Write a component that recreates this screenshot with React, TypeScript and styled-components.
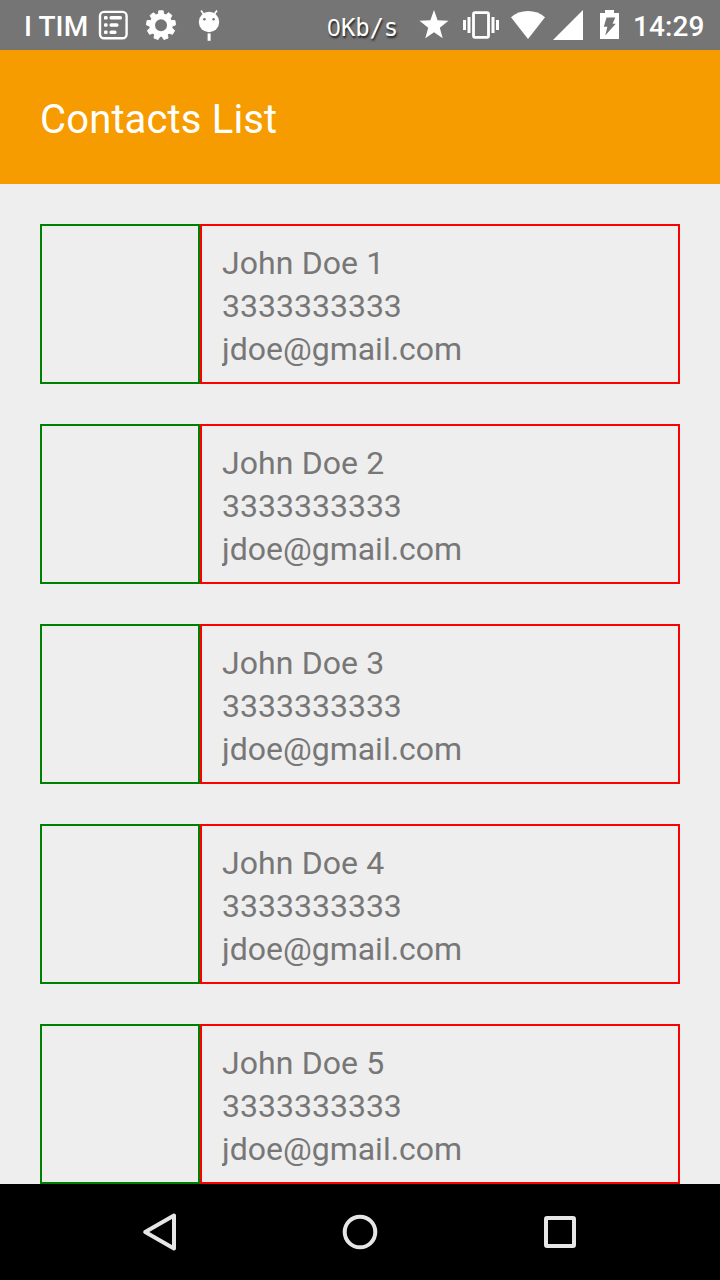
import React from "react";
import styled, { createGlobalStyle } from "styled-components";

const GlobalStyle = createGlobalStyle`
  * { box-sizing: border-box; }
  body { margin: 0; background: #eeeeee; font-family: Roboto, "Noto Sans", sans-serif; }
`;

const Screen = styled.div`
  display: flex;
  flex-direction: column;
  width: 720px;
  height: 1280px;
  overflow: hidden;
  background: #eeeeee;
`;

const StatusBar = styled.header`
  display: flex;
  flex: none;
  align-items: center;
  height: 50px;
  padding-left: 24px;
  background: #757575;
  color: #fff;
`;

const StatusText = styled.span<{ $width: number }>`
  flex: none;
  width: ${(p) => p.$width}px;
  padding-top: 3px;
  font-size: 28px;
  font-weight: 500;
  line-height: 34px;
  letter-spacing: 0.1px;
  white-space: pre;
`;

const Speed = styled.span`
  display: flex;
  flex: none;
  align-items: baseline;
  width: 92px;
  padding-top: 5px;
  font: 24px/34px "DejaVu Sans Mono", monospace;
  letter-spacing: -0.2px;
  text-shadow: 1px 2px 2px rgba(0, 0, 0, 0.7);
`;

const SpeedValue = styled.span`
  width: 14px;
  font-family: "Noto Sans", sans-serif;
`;

const StatusIcon = styled.svg<{ $gap?: number }>`
  flex: none;
  height: 50px;
  margin-right: ${(p) => p.$gap ?? 0}px;
  fill: #fff;
`;

const AppBar = styled.div`
  display: flex;
  flex: none;
  align-items: center;
  height: 134px;
  padding: 6px 40px 0;
  background: #f69c00;
`;

const Title = styled.h1`
  margin: 0;
  color: #fff;
  font-size: 40px;
  font-weight: 400;
  line-height: 48px;
  letter-spacing: 0.15px;
`;

const List = styled.main`
  display: flex;
  flex: 1;
  flex-direction: column;
  gap: 40px;
  min-height: 0;
  padding: 40px 40px 0;
  overflow: hidden;
`;

const Row = styled.article`
  display: flex;
  flex: none;
  height: 160px;
`;

const Photo = styled.div`
  width: 160px;
  border: 2px solid #008000;
`;

const Details = styled.div`
  flex: 1;
  padding: 16px 20px 0;
  border: 2px solid #ff0000;
`;

const Line = styled.div<{ $spacing?: number }>`
  color: #777;
  font-size: 32px;
  line-height: 43px;
  letter-spacing: ${(p) => p.$spacing ?? 0}px;
  overflow-x: clip;
`;

const NavBar = styled.nav`
  display: flex;
  flex: none;
  align-items: center;
  justify-content: center;
  gap: 104px;
  height: 96px;
  background: #000;
`;

const NavIcon = styled.svg`
  width: 96px;
  height: 96px;
  fill: none;
  stroke: #e6e6e6;
  stroke-width: 4;
  stroke-linejoin: round;
`;

const GEAR_TEETH = [0, 40, 80, 120, 160, 200, 240, 280, 320];
const CONTACTS = [1, 2, 3, 4, 5].map((n) => ({
  name: `John Doe ${n}`,
  phone: "3333333333",
  email: "jdoe@gmail.com",
}));

export default function App() {
  return (
    <>
      <GlobalStyle />
      <Screen>
        <StatusBar>
          <StatusText $width={74}>I TIM</StatusText>
          <StatusIcon width={30} viewBox="0 0 30 50" $gap={17}>
            <rect x="2" y="11.9" width="26.6" height="26.4" rx="4" fill="none" stroke="#fff" strokeWidth="2.4" />
            <rect x="6" y="16" width="3.6" height="3.6" rx="1.2" />
            <rect x="6" y="23.2" width="3.6" height="3.6" rx="1.2" />
            <rect x="6" y="30.4" width="3.6" height="3.6" rx="1.2" />
            <rect x="11.5" y="16" width="12.5" height="3.6" rx="1.6" />
            <rect x="11.5" y="23.2" width="9" height="3.6" rx="1.6" />
            <rect x="11.5" y="30.4" width="7" height="3.6" rx="1.6" />
          </StatusIcon>
          <StatusIcon width={32} viewBox="0 0 32 50" $gap={21}>
            <circle cx="16" cy="25.2" r="8.8" fill="none" stroke="#fff" strokeWidth="5.6" />
            {GEAR_TEETH.map((a) => (
              <path
                key={a}
                d="M13 15 13.8 10.7h4.4l.8 4.3z"
                stroke="#fff"
                strokeWidth="0.8"
                strokeLinejoin="round"
                transform={`rotate(${a} 16 25.2)`}
              />
            ))}
          </StatusIcon>
          <StatusIcon width={22} viewBox="0 0 22 50" $gap={107}>
            <path d="M3 10.5 6.3 15M19 10.5 15.7 15" stroke="#fff" strokeWidth="1.7" />
            <circle cx="11" cy="22" r="10.2" />
            <circle cx="6.4" cy="19.3" r="1.3" fill="#757575" />
            <circle cx="15.6" cy="19.3" r="1.3" fill="#757575" />
            <rect x="9.6" y="33.4" width="3" height="7.4" />
          </StatusIcon>
          <Speed>
            <SpeedValue>0</SpeedValue>Kb/s
          </Speed>
          <StatusIcon width={30} viewBox="0 0 30 50" $gap={14}>
            <path d="M15 10 18.6 20.2 29.5 20.8 20.8 27.7 23.7 38.3 15 32.2 6.3 38.3 9.2 27.7.5 20.8 11.4 20.2z" />
          </StatusIcon>
          <StatusIcon width={36} viewBox="0 0 36 50" $gap={12}>
            <rect x="10.5" y="12.7" width="15" height="24.6" rx="1.5" fill="none" stroke="#fff" strokeWidth="2.8" />
            <path d="M0 20h3v10H0zM4.5 17h3v16h-3zM28.5 17h3v16h-3zM33 20h3v10h-3z" />
          </StatusIcon>
          <StatusIcon width={34} viewBox="0 0 34 50" $gap={8}>
            <path d="M17 39 0 17.3Q7 11 17 11T34 17.3z" />
          </StatusIcon>
          <StatusIcon width={30} viewBox="0 0 30 50" $gap={17}>
            <path d="M30 10v30H0z" />
          </StatusIcon>
          <StatusIcon width={19} viewBox="0 0 19 50" $gap={14}>
            <path d="M5 10h9v3h5v26H0V13h5z" />
            <path d="M6.5 17.5h8.8l-2.7 6.2h3.2L5.2 35.5l2.2-8.7H3.8z" fill="#757575" />
          </StatusIcon>
          <StatusText $width={86}>14:29</StatusText>
        </StatusBar>
        <AppBar>
          <Title>Contacts List</Title>
        </AppBar>
        <List>
          {CONTACTS.map((c) => (
            <Row key={c.name}>
              <Photo />
              <Details>
                <Line $spacing={0.1}>{c.name}</Line>
                <Line>{c.phone}</Line>
                <Line>{c.email}</Line>
              </Details>
            </Row>
          ))}
        </List>
        <NavBar>
          <NavIcon viewBox="0 0 96 96">
            <path d="M33.2 48 62 31.5v33z" />
          </NavIcon>
          <NavIcon viewBox="0 0 96 96">
            <circle cx="48" cy="48" r="15.3" />
          </NavIcon>
          <NavIcon viewBox="0 0 96 96">
            <rect x="34" y="34" width="28" height="28" rx="1" />
          </NavIcon>
        </NavBar>
      </Screen>
    </>
  );
}
